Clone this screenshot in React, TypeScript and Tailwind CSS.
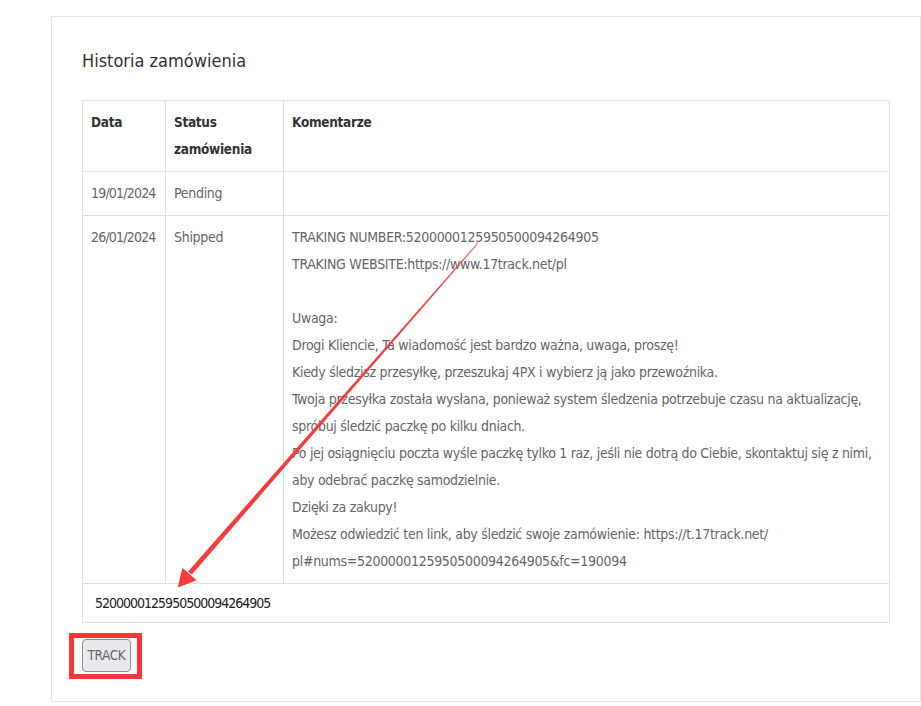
import React from 'react';

const comment = [
  'TRAKING NUMBER:5200000125950500094264905',
  'TRAKING WEBSITE:https://www.17track.net/pl',
  '',
  'Uwaga:',
  'Drogi Kliencie, Ta wiadomość jest bardzo ważna, uwaga, proszę!',
  'Kiedy śledzisz przesyłkę, przeszukaj 4PX i wybierz ją jako przewoźnika.',
  'Twoja przesyłka została wysłana, ponieważ system śledzenia potrzebuje czasu na aktualizację,',
  'spróbuj śledzić paczkę po kilku dniach.',
  'Po jej osiągnięciu poczta wyśle paczkę tylko 1 raz, jeśli nie dotrą do Ciebie, skontaktuj się z nimi,',
  'aby odebrać paczkę samodzielnie.',
  'Dzięki za zakupy!',
  'Możesz odwiedzić ten link, aby śledzić swoje zamówienie: https://t.17track.net/',
  'pl#nums=5200000125950500094264905&fc=190094',
];

function Arrow() {
  return (
    <svg className="absolute left-0 top-0 pointer-events-none" width="921" height="706" viewBox="0 0 921 706">
      <polygon points="478.3,243.3 477.7,242.7 188.1,571.4 191.9,574.6" fill="#f63b3b" />
      <polygon points="177.7,587.6 182.4,567.8 196.6,580.2" fill="#f63b3b" />
    </svg>
  );
}

export default function App() {
  return (
    <div className="relative w-[921px] h-[706px] bg-white font-['DejaVu_Sans_Condensed','DejaVu_Sans',sans-serif] text-[13px] tracking-[-0.3px] leading-[27px] text-[#666]">
      <div className="ml-[51px] pt-4">
        <div className="w-[870px] h-[686px] border border-[#e5e5e5] px-[30px] pt-[30px]">
          <h2 className="text-[18px] leading-[28px] font-medium tracking-normal text-[#333] mb-[25px]">Historia zamówienia</h2>
          <table className="w-[808px] border-collapse table-fixed">
            <colgroup>
              <col className="w-[83px]" />
              <col className="w-[118px]" />
              <col />
            </colgroup>
            <thead>
              <tr className="text-[#333] font-bold">
                <th className="border border-[#e0e0e0] px-2 py-2 text-left align-top font-bold text-[13.5px]">Data</th>
                <th className="border border-[#e0e0e0] px-2 py-2 text-left align-top font-bold text-[13.5px]">Status zamówienia</th>
                <th className="border border-[#e0e0e0] px-2 py-2 text-left align-top font-bold text-[13.5px]">Komentarze</th>
              </tr>
            </thead>
            <tbody>
              <tr>
                <td className="border border-[#e0e0e0] px-2 py-2 align-top text-[14px] tracking-[-0.8px] whitespace-nowrap">19/01/2024</td>
                <td className="border border-[#e0e0e0] px-2 py-2 align-top text-[14px]">Pending</td>
                <td className="border border-[#e0e0e0] px-2 py-2 align-top"></td>
              </tr>
              <tr>
                <td className="border border-[#e0e0e0] px-2 py-2 align-top text-[14px] tracking-[-0.8px] whitespace-nowrap">26/01/2024</td>
                <td className="border border-[#e0e0e0] px-2 py-2 align-top text-[14px]">Shipped</td>
                <td className="border border-[#e0e0e0] px-2 py-2 align-top text-[14px]">
                  {comment.map((line, i) => (
                    <div key={i} className="min-h-[27px] whitespace-nowrap">{line}</div>
                  ))}
                </td>
              </tr>
              <tr>
                <td colSpan={3} className="border border-[#e0e0e0] px-3 h-[39px] text-[14px] tracking-[-1px] text-[#222]">
                  5200000125950500094264905
                </td>
              </tr>
            </tbody>
          </table>
          <div className="relative mt-4 w-[49px]">
            <button className="w-[49px] h-[33px] rounded-[4px] border border-[#8f8f9d] bg-[#e9e9ed] text-[#666] text-[13.5px] tracking-[-0.4px]">
              TRACK
            </button>
            <div className="absolute left-[-13px] top-[-6px] w-[73px] h-[46px] border-[5px] border-[#fb3636] pointer-events-none" />
          </div>
        </div>
      </div>
      <Arrow />
    </div>
  );
}
